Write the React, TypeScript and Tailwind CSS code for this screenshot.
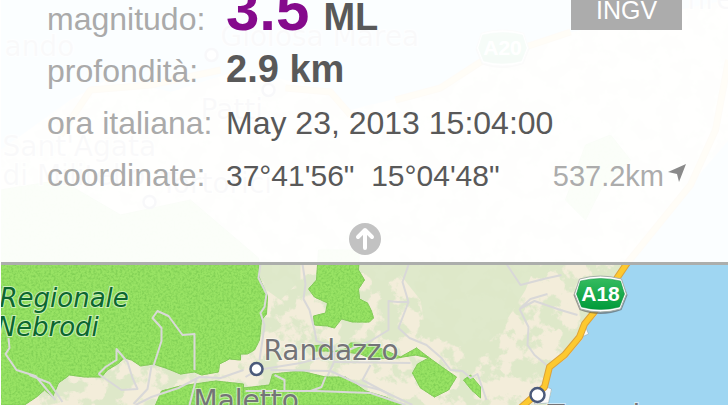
import React from 'react';

type QuakeRowProps = {
  label: string;
  children: React.ReactNode;
};

type TownProps = {
  x: number;
  y: number;
  name: string;
};

function Town({ x, y, name }: TownProps) {
  return <text x={x} y={y} fontSize="28" fill="#747477" stroke="#ffffff" strokeOpacity="0.5" strokeWidth="2" paintOrder="stroke">
      {name}
    </text>;
}

function Marker({ x, y, r = 6 }: { x: number; y: number; r?: number }) {
  return <circle cx={x} cy={y} r={r} fill="#ffffff" stroke="#4b5a7a" strokeWidth="2.5" />;
}

function Shield({ x, y, name }: TownProps) {
  return <g transform={`translate(${x} ${y})`}>
      <path d="M-21 -15 Q0 -21 21 -15 L27 0 L21 15 Q0 23 -21 15 L-27 0 Z" fill="#555555" opacity="0.6" strokeLinejoin="round" />
      <path d="M-21 -16 Q0 -22 21 -16 L26 -1 L20 14 Q0 20 -20 14 L-26 -1 Z" fill="#ffffff" stroke="#a9b0aa" strokeWidth="1" strokeLinejoin="round" />
      <path d="M-20 -14 Q0 -19 20 -14 L24 -1 L19 12 Q0 17 -19 12 L-24 -1 Z" fill="url(#shield)" stroke="#0b8a3c" strokeWidth="0.5" />
      <text x="0" y="6" textAnchor="middle" fontSize="21" fontWeight="700" fill="#ffffff" fontFamily='"Liberation Sans", Arial, sans-serif'>
        {name}
      </text>
    </g>;
}

const parks = [
  // Nebrodi
  'M0 190 L60 180 L120 215 L190 200 L258 258 L259 278 L267 296 L266 314 L261 320 L259 340 L254 350 L247 354 L240 354 L240 360 L229 359 L219 364 L218 372 L201 375 L194 372 L180 374 L165 368 L153 364 L140 366 L131 360 L124 358 L117 364 L107 370 L101 377 L84 377 L69 375 L58 383 L52 397 L44 390 L36 397 L24 405 L0 405 Z',
  // North of Randazzo
  'M318 250 L359 250 L358 270 L364 280 L358 289 L359 299 L367 303 L371 311 L373 318 L369 322 L352 322 L341 319 L334 328 L327 326 L314 325 L313 316 L325 313 L327 303 L314 297 L308 289 L316 280 Z',
  'M272 374 L300 371 L325 377 L345 377 L365 391 L385 397 L402 405 L243 405 L243 388 L269 385 Z',
  'M161 391 L180 386 L215 381 L243 384 L243 405 L155 405 Z',
  'M311 346 L322 345 L331 352 L345 349 L350 343 L370 344 L384 350 L400 357 L416 348 L425 355 L440 366 L456 377 L448 390 L434 397 L420 388 L412 373 L417 364 L428 358 L415 355 L396 358 L371 359 L360 354 L345 352 L325 351 L313 351 Z',
  'M463 380 L470 375 L480 387 L480 398 L471 390 Z'
];

const roads = [
  'M260 264 L258 278 L266 294 L264 307 L260 313 L264 325 L262 340 L259 360',
  'M302 264 L305 284 L303 299 L309 310 L314 330 L316 341 L334 347 L333 363 L327 376',
  'M409 262 L402 282 L408 302 L397 302 L388 301 L388 330 L370 341 L343 352 L300 363 L257 370 L245 377',
  'M408 302 L398 328 L409 338 L426 345 L441 358 L450 370 L462 371 L470 378 L477 374 L486 400',
  'M8 338 L9 348 L5 354 L16 370 L35 376 L55 400 M29 375 L49 383 L62 402',
  'M153 366 L161 341 L161 328 L152 318 L157 311 L168 316 L182 335 L194 334 L194 370',
  'M98 374 L105 367 L116 360 L116 349 L127 362 L132 378 L137 389 L121 390 L98 374',
  'M270 370 L330 371 L360 385 L380 390 L412 405 M245 391 L315 391 L370 393 L405 405',
  'M135 405 L151 397 L178 388 L199 377 L220 378 L243 370 M151 366 L147 389 L133 404',
  'M196 378 L189 405 M274 375 L284 380 L284 391 M325 377 L321 387 L310 391',
  'M506 264 L520 285 L543 279 L561 275 M519 309 L530 299 L547 294 M519 309 L534 301 L560 310 L577 315',
  'M519 309 L528 327 L527 345 L534 355 L546 365',
  'M370 365 L362 380 L390 395 M333 362 L410 363'
];

const motorway = 'M60 135 L90 90 L150 85 L220 70 M285 88 L330 92 L350 115 M395 100 L440 88 L480 62 L570 32 M728 60 L715 130 L690 185 L626 264 L593 313 L584 324 L579 337 L564 355 L549 367 L544 387 L520 408';

function SicilyMap() {
  return <svg className="absolute inset-0 h-full w-full" viewBox="0 0 728 405" preserveAspectRatio="xMidYMin slice" fontFamily='"DejaVu Sans", "Open Sans", sans-serif' aria-label="Mappa">
      <defs>
        <linearGradient id="shield" x1="0" y1="0" x2="0" y2="1">
          <stop offset="0" stopColor="#35bb5f" />
          <stop offset="1" stopColor="#009b3a" />
        </linearGradient>
        <filter id="grain" x="0" y="0" width="1" height="1" colorInterpolationFilters="sRGB">
          <feTurbulence type="fractalNoise" baseFrequency="0.45" numOctaves="2" seed="4" result="noise" />
          <feColorMatrix in="noise" type="matrix" values="0 0 0 0 0.5  0 0 0 0 0.81  0 0 0 0 0.33  2.4 0 0 0 -0.95" result="specks" />
          <feComposite in="specks" in2="SourceGraphic" operator="in" result="cut" />
          <feMerge>
            <feMergeNode in="SourceGraphic" />
            <feMergeNode in="cut" />
          </feMerge>
        </filter>
        <filter id="woods" x="0" y="0" width="1" height="1" colorInterpolationFilters="sRGB">
          <feTurbulence type="fractalNoise" baseFrequency="0.05" numOctaves="5" seed="7" />
          <feColorMatrix type="matrix" values="0 0 0 0 0.87  0 0 0 0 0.91  0 0 0 0 0.79  12 0 0 0 -5.6" />
        </filter>
        <clipPath id="land">
          <path d="M0 150 L70 100 L110 78 L170 92 L240 70 L330 90 L350 110 L430 90 L500 50 L580 30 L728 0 L728 140 L690 185 L628 266 L596 315 L586 326 L582 339 L566 358 L551 369 L546 385 L551 391 L547 405 L0 405 Z" />
        </clipPath>
      </defs>
      <rect width="728" height="405" fill="#9fd6f2" />
      <g clipPath="url(#land)">
        <rect width="728" height="405" fill="#f3edda" />
        <path d="M264 262 L300 262 L300 280 L280 300 L266 290 Z M365 262 L490 262 L535 264 L525 290 L500 330 L480 350 L455 345 L425 330 L420 300 L400 275 L375 290 Z" fill="#dfe9cb" />
        <rect width="728" height="405" filter="url(#woods)" />
        <g filter="url(#grain)" fill="#98e364" stroke="#86c95c" strokeWidth="1">
          {parks.map(d => <path key={d} d={d} />)}
          <path d="M585 145 L610 135 L630 160 L600 190 L585 220 L565 200 Z" />
        </g>
        <g fill="none" stroke="#d9d8d8" strokeWidth="2" strokeLinejoin="round">
          {roads.map(d => <path key={d} d={d} />)}
        </g>
      </g>
      <path d="M584 324 L588 334 L579 338 Z M541 385 L551 389 L548 403 L534 404 Z" fill="#fafafa" stroke="#8ba0ab" strokeWidth="0.5" />
      <g fill="none" strokeLinejoin="round">
        <path d={motorway} stroke="#dba23b" strokeWidth="7" />
        <path d={motorway} stroke="#fdc92f" strokeWidth="5" />
      </g>
      <Marker x={211} y={55} />
      <Marker x={268} y={90} />
      <Marker x={149} y={202} />
      <Marker x={256} y={369} />
      <Marker x={537} y={395} r={7} />
      <Town x={4} y={56} name="ando" />
      <Town x={220} y={46} name="Gioiosa Marea" />
      <Town x={200} y={119} name="Patti" />
      <Town x={2} y={156} name="Sant'Agata" />
      <Town x={2} y={185} name="di Militello" />
      <Town x={160} y={193} name="Tortorici" />
      <Town x={687} y={9} name="nre" />
      <Town x={263} y={360} name="Randazzo" />
      <Town x={193} y={410} name="Maletto" />
      <Town x={547} y={425} name="Taormina" />
      <g fontSize="26" fontStyle="italic" fill="#0c6630" stroke="#c9f0b4" strokeWidth="2" paintOrder="stroke">
        <text x="-1" y="307">Regionale</text>
        <text x="-4" y="336">Nebrodi</text>
      </g>
      <Shield x={502} y={49} name="A20" />
      <Shield x={600} y={295} name="A18" />
    </svg>;
}

function QuakeRow({ label, children }: QuakeRowProps) {
  return <div className="flex items-baseline">
      <dt className="w-[179px] shrink-0 text-[32px] leading-[52px] text-[#aaaaaa]">{label}</dt>
      <dd className="flex flex-1 items-baseline text-[#595959]">{children}</dd>
    </div>;
}

function QuakePanel() {
  return <section className="relative border-b-[3px] border-[#acaeac] bg-white/96 pb-[7px]">
      <dl className="-mt-[7px] pr-[42px] pl-[46px]">
        <QuakeRow label="magnitudo:">
          <strong className="text-[60px] leading-8 font-bold text-[#850a8c]">3.5</strong>
          <strong className="ml-3.5 text-[38px] leading-8 font-bold">ML</strong>
          <span className="mr-1 ml-auto h-9 w-[111px] self-start bg-[#acacac] text-center text-[25px] leading-8 text-white">INGV</span>
        </QuakeRow>
        <QuakeRow label="profondità:">
          <strong className="text-[38px] leading-8 font-bold">2.9 km</strong>
        </QuakeRow>
        <QuakeRow label="ora italiana:">
          <span className="text-[32px] leading-8">May 23, 2013 15:04:00</span>
        </QuakeRow>
        <QuakeRow label="coordinate:">
          <span className="text-[30px] leading-8 whitespace-pre">{'37°41\'56"  15°04\'48"'}</span>
          <span className="ml-auto flex text-[29px] leading-8 text-[#acacac]">
            537.2km
            <svg className="mt-1 ml-1 h-[18px] w-[18px]" viewBox="0 0 18 18" fill="#8a8a8a" aria-hidden="true">
              <path d="M18 0 L11 18 L9 10 L0 8 Z" />
            </svg>
          </span>
        </QuakeRow>
      </dl>
      <button type="button" aria-label="Chiudi" className="mx-auto mt-[22px] block h-8 w-8 rounded-full bg-[#c2c2c2]">
        <svg className="h-8 w-8" viewBox="0 0 32 32" fill="none" stroke="#ffffff" strokeWidth="4" strokeLinecap="round" strokeLinejoin="round" aria-hidden="true">
          <path d="M16 25 V8 M9 14 L16 7 L23 14" />
        </svg>
      </button>
    </section>;
}

export default function App() {
  return <main className="relative min-h-screen overflow-hidden border-l border-white font-['Liberation_Sans',Arial,sans-serif]">
      <SicilyMap />
      <QuakePanel />
    </main>;
}
